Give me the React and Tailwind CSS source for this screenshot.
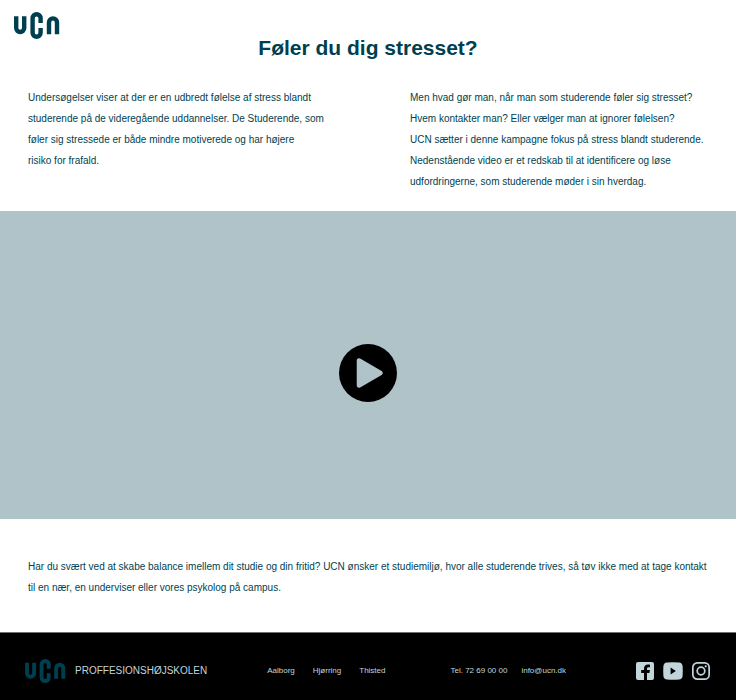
function UcnLogo({ className }) {
  return (
    <svg viewBox="0 0 46 27" className={className} fill="none" stroke="currentColor" strokeWidth="4.4" role="img" aria-label="UCN">
      <path d="M2.200 4.200V16a4 4 0 0 0 8 0V4.200" />
      <path d="M26.600 11V6.200a4 4 0 0 0-8 0v14.600a4 4 0 0 0 8 0V16" />
      <path d="M35 22.200V10.400a4 4 0 0 1 8 0v11.800" />
    </svg>
  );
}

function FacebookIcon() {
  return (
    <svg viewBox="0 0 18 18" className="h-[18px] w-[18px]" fill="currentColor" aria-hidden="true">
      <path d="M2 0h14a2 2 0 0 1 2 2v14a2 2 0 0 1-2 2h-5v-7h2.400l.5-2.900H11V6.700c0-.9.500-1.500 1.500-1.500H14V2.800c-.5-.1-1.200-.2-2-.2-2.400 0-4 1.400-4 3.800v1.700H5.200V11H8v7H2a2 2 0 0 1-2-2V2a2 2 0 0 1 2-2z" />
    </svg>
  );
}

function YoutubeIcon() {
  return (
    <svg viewBox="0 0 20 18" className="h-[18px] w-5" fill="currentColor" aria-hidden="true">
      <path fillRule="evenodd" d="M4 .4Q10 0 16 .4Q19.200.7 19.600 4Q20 9 19.600 14Q19.200 17.300 16 17.600Q10 18 4 17.600Q.8 17.300.4 14Q0 9 .4 4Q.8.7 4 .4zM7.600 5.500v7L12.900 9z" />
    </svg>
  );
}

function InstagramIcon() {
  return (
    <svg viewBox="0 0 18 18" className="h-[18px] w-[18px]" fill="none" stroke="currentColor" strokeWidth="1.700" aria-hidden="true">
      <rect x=".85" y=".85" width="16.300" height="16.300" rx="4.500" />
      <circle cx="9" cy="9" r="3.800" />
      <circle cx="13.700" cy="4.300" r="1.100" fill="currentColor" stroke="none" />
    </svg>
  );
}

export default function App() {
  return (
    <div className="bg-white font-['Liberation_Sans',Arial,sans-serif] text-[#003f4f]">
      <header className="px-3.5 pt-3">
        <a href="#" className="block w-[46px]">
          <UcnLogo className="h-[27px] w-[46px]" />
        </a>
        <h1 className="-mt-[3px] text-center text-[21px] leading-6 font-bold">Føler du dig stresset?</h1>
      </header>

      <main>
        <section className="grid grid-cols-2 gap-7 px-7 pt-[27px] pb-[19px] text-[10px] leading-[21px]">
          <p>
            Undersøgelser viser at der er en udbredt følelse af stress blandt
            <br />
            studerende på de videregående uddannelser. De Studerende, som
            <br />
            føler sig stressede er både mindre motiverede og har højere
            <br />
            risiko for frafald.
          </p>
          <p className="pl-7">
            Men hvad gør man, når man som studerende føler sig stresset?
            <br />
            Hvem kontakter man? Eller vælger man at ignorer følelsen?
            <br />
            UCN sætter i denne kampagne fokus på stress blandt studerende.
            <br />
            Nedenstående video er et redskab til at identificere og løse
            <br />
            udfordringerne, som studerende møder i sin hverdag.
          </p>
        </section>

        <section className="flex h-[308px] items-center justify-center bg-[#b0c3c9] pt-4">
          <button type="button" aria-label="Afspil video" className="rounded-full text-black">
            <svg viewBox="0 0 58 58" className="h-[58px] w-[58px]" aria-hidden="true">
              <circle cx="29" cy="29" r="29" fill="currentColor" />
              <path d="M20 16.500v25L41.500 29z" fill="#b0c3c9" stroke="#b0c3c9" strokeWidth="4.500" strokeLinejoin="round" />
            </svg>
          </button>
        </section>

        <section className="px-7 pt-[37px] pb-[34px] text-[10px] leading-[21px]">
          <p>
            Har du svært ved at skabe balance imellem dit studie og din fritid? UCN ønsker et studiemiljø, hvor alle studerende trives, så tøv ikke med at tage kontakt
            <br />
            til en nær, en underviser eller vores psykolog på campus.
          </p>
        </section>
      </main>

      <footer className="flex h-[68px] items-center border-t border-[#707070] bg-black pt-2 pr-[26px] pl-[25px] text-[#c2d5da]">
        <UcnLogo className="h-6 w-[41px] text-[#003f4f]" />
        <span className="ml-[9px] text-[10px]">PROFFESIONSHØJSKOLEN</span>
        <address className="flex flex-1 justify-center gap-[65px] pr-2.5 text-[8px] not-italic">
          <div className="flex gap-[18px]">
            <span>Aalborg</span>
            <span>Hjørring</span>
            <span>Thisted</span>
          </div>
          <div className="flex gap-3.5">
            <a href="tel:72690000">Tel. 72 69 00 00</a>
            <a href="mailto:info@ucn.dk">info@ucn.dk</a>
          </div>
        </address>
        <div className="flex gap-[9px]">
          <a href="#" aria-label="Facebook"><FacebookIcon /></a>
          <a href="#" aria-label="YouTube"><YoutubeIcon /></a>
          <a href="#" aria-label="Instagram"><InstagramIcon /></a>
        </div>
      </footer>
    </div>
  );
}
